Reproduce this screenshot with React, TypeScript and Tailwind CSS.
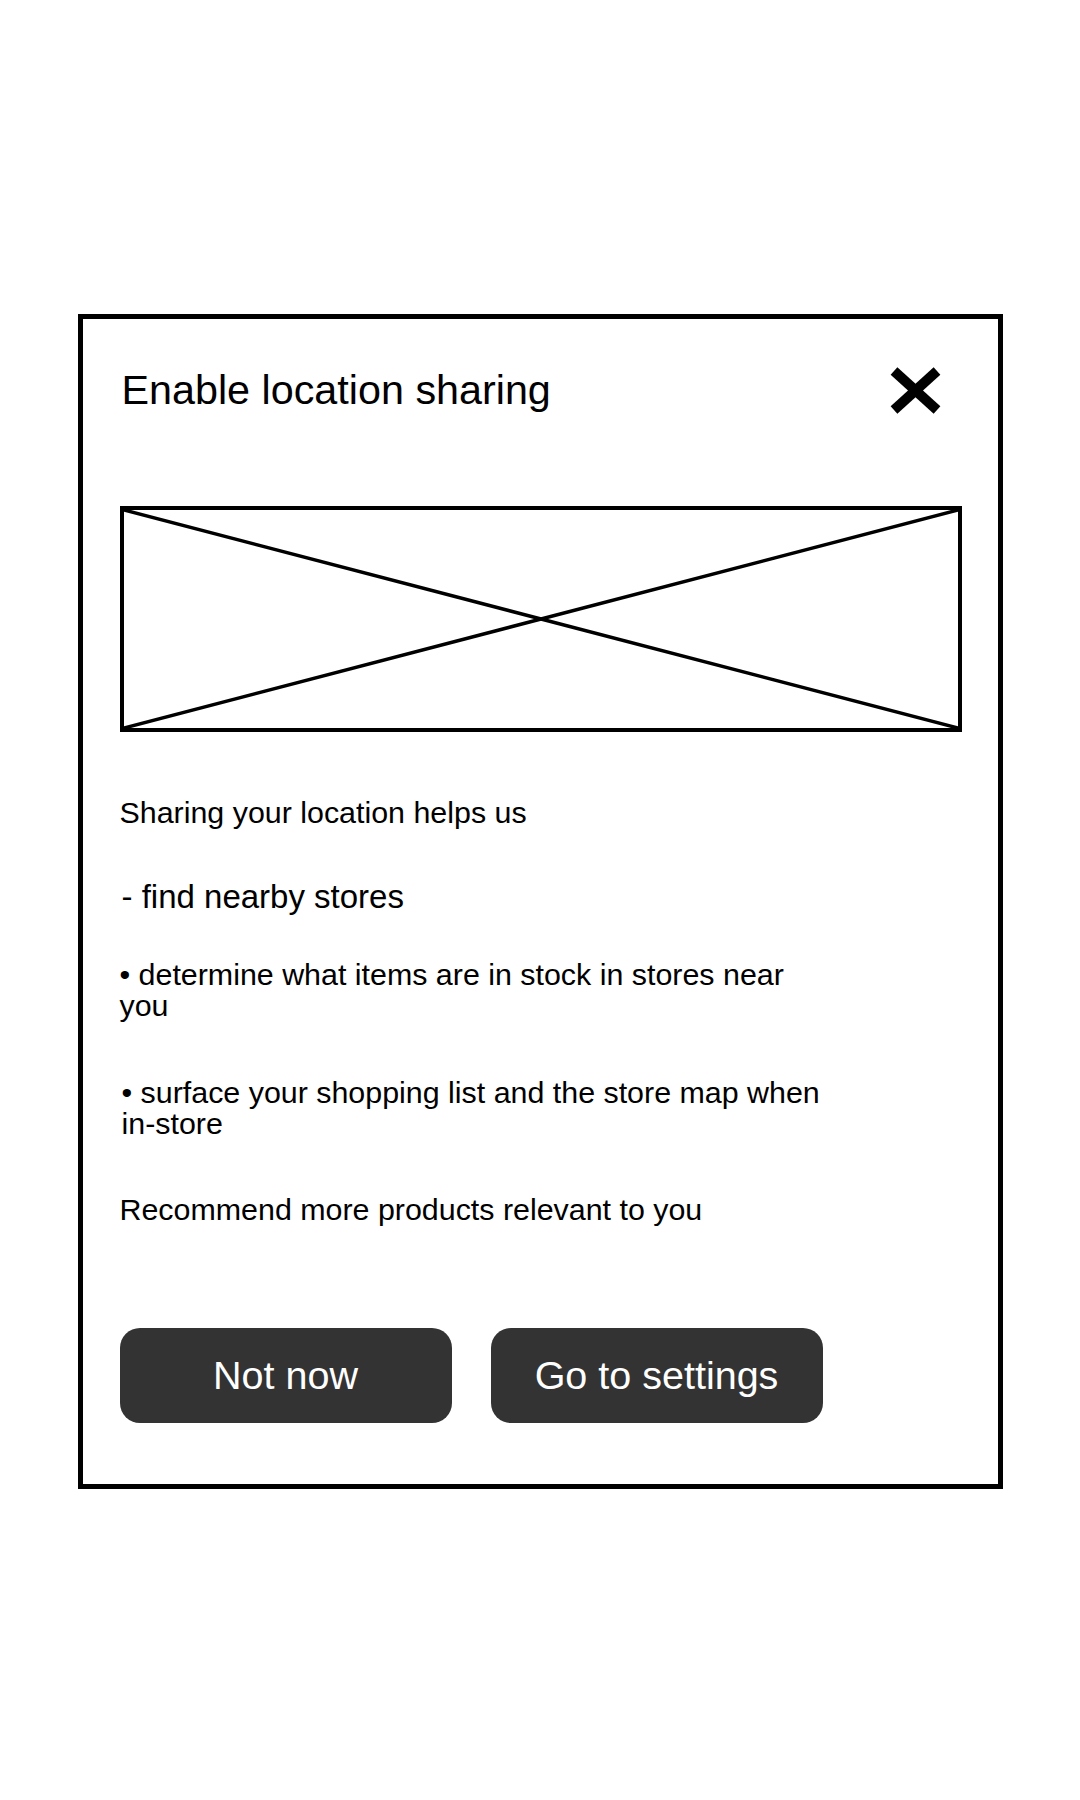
import React from "react";

const font = { fontFamily: '"Liberation Sans", Arial, sans-serif' };

function CloseIcon() {
  return (
    <svg width="51" height="47" viewBox="0 0 51 47" aria-hidden="true">
      <line x1="4" y1="4" x2="47" y2="43" stroke="#000" strokeWidth="10" />
      <line x1="47" y1="4" x2="4" y2="43" stroke="#000" strokeWidth="10" />
    </svg>
  );
}

function ImagePlaceholder() {
  return (
    <div className="h-[226px] w-full border-4 border-black">
      <svg className="block h-full w-full" viewBox="0 0 100 100" preserveAspectRatio="none">
        <line x1="0" y1="0" x2="100" y2="100" stroke="#000" strokeWidth="3.5" vectorEffect="non-scaling-stroke" />
        <line x1="100" y1="0" x2="0" y2="100" stroke="#000" strokeWidth="3.5" vectorEffect="non-scaling-stroke" />
      </svg>
    </div>
  );
}

export default function App() {
  return (
    <div className="min-h-[1800px] w-[1080px] bg-white pt-[314px] text-black" style={font}>
      <div className="mx-auto w-[925px] border-[5px] border-black pb-[61px] pl-[37px] pr-[36px] pt-[48px]">
        <div className="flex h-[47px] items-center justify-between pr-[21px]">
          <h1 className="pl-[2px] text-[41.3px] font-normal leading-none">Enable location sharing</h1>
          <button type="button" aria-label="Close">
            <CloseIcon />
          </button>
        </div>

        <div className="mt-[92px]">
          <ImagePlaceholder />
        </div>

        <div className="w-[705px]">
          <p className="mt-[65px] text-[30.4px] leading-[31px]">Sharing your location helps us</p>
          <p className="mt-[52px] pl-[2px] text-[33px] leading-none">- find nearby stores</p>
          <p className="mt-[46px] text-[30.4px] leading-[31px]">• determine what items are in stock in stores near you</p>
          <p className="mt-[56px] pl-[2px] text-[30.4px] leading-[31px]">• surface your shopping list and the store map when in-store</p>
          <p className="mt-[55px] text-[30.4px] leading-[31px]">Recommend more products relevant to you</p>
        </div>

        <div className="mt-[103px] flex gap-[39px]">
          <button
            type="button"
            className="flex h-[95px] w-[332px] items-center justify-center rounded-[20px] bg-[#333333] text-[39.5px] leading-none text-white"
          >
            Not now
          </button>
          <button
            type="button"
            className="flex h-[95px] w-[332px] items-center justify-center rounded-[20px] bg-[#333333] text-[39.5px] leading-none text-white"
          >
            Go to settings
          </button>
        </div>
      </div>
    </div>
  );
}
